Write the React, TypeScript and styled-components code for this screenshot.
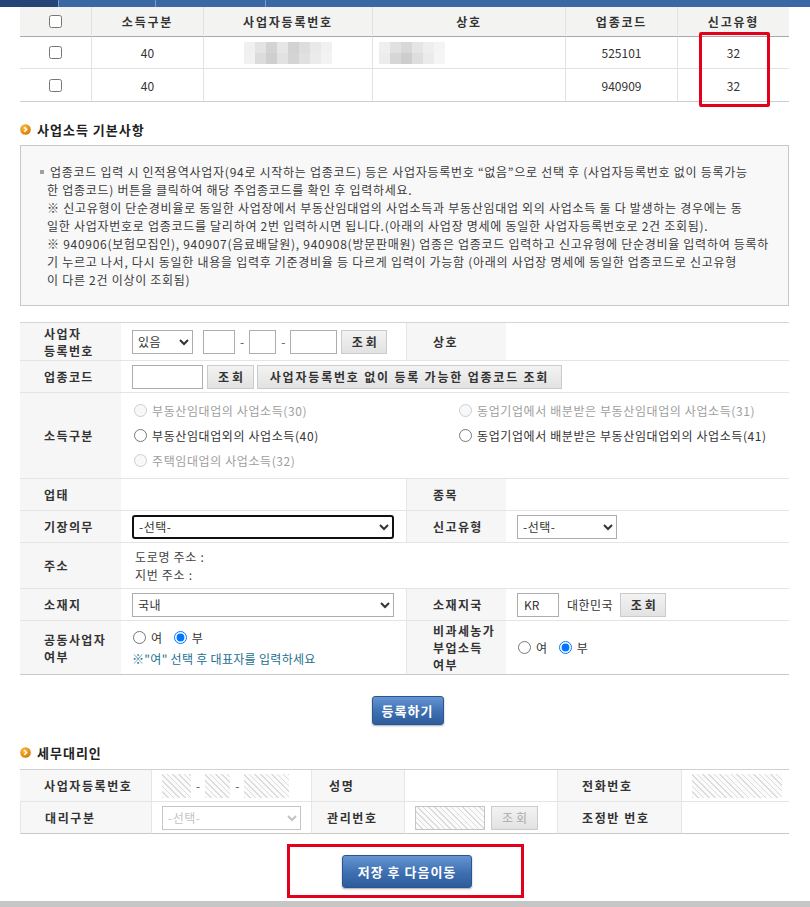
import React from "react";
import styled, { createGlobalStyle } from "styled-components";

const GlobalStyle = createGlobalStyle`
  html, body { margin: 0; padding: 0; background: #fff; }
  body {
    font-family: "Noto Sans CJK KR", "Noto Sans", "Liberation Sans", sans-serif;
    font-size: 12px;
    color: #333;
  }
  * { box-sizing: border-box; }
`;

const Page = styled.div`
  width: 810px;
  height: 907px;
  overflow: hidden;
  display: flex;
  flex-direction: column;
`;

const TopBar = styled.div`
  display: flex;
  height: 7px;
  flex: none;
`;

const BarSeg = styled.div<{ $w?: number; $dark?: boolean; $sep?: boolean }>`
  width: ${(p) => (p.$w ? `${p.$w}px` : "auto")};
  flex: ${(p) => (p.$w ? "none" : 1)};
  background: ${(p) => (p.$dark ? "#254577" : "#3b68a4")};
  border-left: ${(p) => (p.$sep ? "1px solid #7d9ccb" : "none")};
`;

const Content = styled.div`
  width: 769px;
  margin-left: 20px;
  display: flex;
  flex-direction: column;
  flex: none;
`;

/* ---------- top list table ---------- */
const ListTable = styled.div`
  position: relative;
  display: grid;
  grid-template-columns: 71px 112px 169px 193px 112px 112px;
`;

const HeadCell = styled.div<{ $first?: boolean }>`
  height: 30px;
  display: flex;
  align-items: center;
  justify-content: center;
  background: #f3f3f1;
  border-bottom: 1px solid #a9a9a9;
  border-left: ${(p) => (p.$first ? "none" : "1px solid #e2e2e2")};
  font-weight: 700;
  letter-spacing: 1.8px;
  color: #333;
`;

const BodyCell = styled.div<{ $first?: boolean; $h: number; $last?: boolean; $left?: boolean }>`
  height: ${(p) => p.$h}px;
  display: flex;
  align-items: center;
  justify-content: ${(p) => (p.$left ? "flex-start" : "center")};
  padding-left: ${(p) => (p.$left ? "6px" : "0")};
  border-bottom: 1px solid ${(p) => (p.$last ? "#cdcdcd" : "#e2e2e2")};
  border-left: ${(p) => (p.$first ? "none" : "1px solid #e2e2e2")};
  color: #333;
`;

const Check = styled.input`
  width: 13px;
  height: 13px;
  margin: 0;
`;

const Mosaic = styled.div<{ $cols: number }>`
  display: grid;
  grid-template-columns: repeat(${(p) => p.$cols}, 11px);
  grid-auto-rows: 11px;
`;

const Tile = styled.span<{ $c: string }>`
  background: ${(p) => p.$c};
`;

const Annotation = styled.div`
  position: absolute;
  left: 679px;
  top: 25px;
  width: 71px;
  height: 75px;
  border: 3px solid #e2001a;
  border-radius: 2px;
  pointer-events: none;
`;

/* ---------- section titles ---------- */
const SectionTitle = styled.div<{ $mt: number }>`
  margin-top: ${(p) => p.$mt}px;
  height: 18px;
  display: flex;
  align-items: center;
  gap: 6px;
  font-size: 13px;
  font-weight: 700;
  letter-spacing: 1px;
  color: #222;
`;

const BulletIcon = () => (
  <svg width="11" height="11" viewBox="0 0 11 11">
    <defs>
      <radialGradient id="og" cx="40%" cy="35%" r="65%">
        <stop offset="0%" stopColor="#ffc24a" />
        <stop offset="100%" stopColor="#d97a00" />
      </radialGradient>
    </defs>
    <circle cx="5.5" cy="5.5" r="5.3" fill="url(#og)" />
    <path d="M4.3 3.2 L6.6 5.5 L4.3 7.8" fill="none" stroke="#fff" strokeWidth="1.5" />
  </svg>
);

/* ---------- info box ---------- */
const InfoBox = styled.div`
  margin-top: 7px;
  height: 161px;
  border: 1px solid #c8c8c8;
  background: #f8f8f8;
  padding: 17px 8px 0 26px;
  line-height: 18px;
  color: #3a3a3a;
`;

const InfoLine = styled.div`
  white-space: nowrap;
  letter-spacing: 0.72px;
`;

const Square = styled.span`
  display: inline-block;
  width: 4px;
  height: 4px;
  background: #a0a0a0;
  margin-left: -7px;
  margin-right: 6px;
  vertical-align: 3px;
`;

/* ---------- form grid ---------- */
const FormGrid = styled.div`
  margin-top: 16px;
  display: grid;
  grid-template-columns: 101px 285px 100px 283px;
  grid-template-rows: 38px 32px 86px 32px 32px 46px 32px 54px;
  border-top: 1px solid #d5d5d5;
`;

const Label = styled.div<{ $right?: boolean; $last?: boolean }>`
  display: flex;
  align-items: center;
  background: #f6f6f6;
  padding-left: ${(p) => (p.$right ? "26px" : "24px")};
  border-left: ${(p) => (p.$right ? "1px solid #e6e6e6" : "none")};
  border-bottom: 1px solid ${(p) => (p.$last ? "#c8c8c8" : "#e4e4e4")};
  font-weight: 700;
  letter-spacing: 1.4px;
  line-height: 17px;
  color: #333;
`;

const Value = styled.div<{ $span?: boolean; $last?: boolean; $col?: boolean }>`
  grid-column: ${(p) => (p.$span ? "span 3" : "auto")};
  display: flex;
  flex-direction: ${(p) => (p.$col ? "column" : "row")};
  align-items: ${(p) => (p.$col ? "flex-start" : "center")};
  justify-content: ${(p) => (p.$col ? "center" : "flex-start")};
  padding-left: 11px;
  border-bottom: 1px solid ${(p) => (p.$last ? "#c8c8c8" : "#e4e4e4")};
  color: #333;
`;

const TextInput = styled.input<{ $w: number }>`
  width: ${(p) => p.$w}px;
  height: 24px;
  border: 1px solid #adadad;
  background: #fff;
  font: inherit;
  color: #333;
  padding: 0 6px;
  margin: 0;
`;

const Select = styled.select<{ $w: number; $focus?: boolean }>`
  width: ${(p) => p.$w}px;
  height: 24px;
  border: ${(p) => (p.$focus ? "2px solid #111" : "1px solid #adadad")};
  border-radius: ${(p) => (p.$focus ? "3px" : "0")};
  background: #fff;
  font: inherit;
  letter-spacing: 0.5px;
  color: ${(p) => (p.disabled ? "#aaa" : "#333")};
  margin: 0;
  padding: 0 1px;
`;

const GrayButton = styled.button<{ $w: number; $wide?: boolean; $mr?: number }>`
  width: ${(p) => p.$w}px;
  height: 24px;
  margin: 0 ${(p) => p.$mr ?? 0}px 0 0;
  padding: 0 0 0 ${(p) => (p.$wide ? 3 : 0)}px;
  border: 1px solid #cbcbcb;
  background: linear-gradient(#f3f3f3, #e2e2e2);
  font-family: inherit;
  font-size: 12px;
  font-weight: ${(p) => (p.disabled ? 400 : 700)};
  letter-spacing: ${(p) => (p.$wide ? "3px" : "1.8px")};
  color: ${(p) => (p.disabled ? "#aaa" : "#333")};
  white-space: nowrap;
  cursor: pointer;
`;

const Dash = styled.span`
  margin: 0 5px;
  color: #555;
`;

const Gap = styled.span<{ $w: number }>`
  display: inline-block;
  width: ${(p) => p.$w}px;
  flex: none;
`;

const RadioGrid = styled.div`
  display: grid;
  grid-template-columns: 325px 1fr;
  row-gap: 8px;
  padding-left: 1px;
`;

const RadioRow = styled.div`
  display: flex;
  align-items: center;
  gap: 10px;
`;

const RadioLabel = styled.label<{ $disabled?: boolean }>`
  display: inline-flex;
  align-items: center;
  gap: 5px;
  height: 17px;
  white-space: nowrap;
  letter-spacing: 0.6px;
  color: ${(p) => (p.$disabled ? "#9e9e9e" : "#333")};
`;

const Radio = styled.input`
  width: 13px;
  height: 13px;
  margin: 0 0 0 1px;
`;

const AddressLines = styled.div`
  padding-left: 3px;
  line-height: 18px;
  letter-spacing: 0.7px;
  color: #444;
`;

const Note = styled.div`
  margin-top: 4px;
  color: #22708f;
  line-height: 17px;
  letter-spacing: 0.3px;
`;

const PlainText = styled.span`
  margin: 0 7px 0 8px;
  letter-spacing: 0.5px;
  color: #333;
`;

/* ---------- buttons ---------- */
const ButtonRow = styled.div`
  margin-top: 21px;
  display: flex;
  justify-content: center;
  padding-left: 6px;
`;

const BlueButton = styled.button<{ $w: number; $h: number }>`
  width: ${(p) => p.$w}px;
  height: ${(p) => p.$h}px;
  padding: 0;
  border: 1px solid #2a5592;
  border-radius: 3px;
  background: linear-gradient(#6594d2, #3d6fb1 55%, #2d5c9c);
  box-shadow: 0 1px 2px rgba(0, 0, 0, 0.35);
  color: #fff;
  font-family: inherit;
  font-size: 13px;
  font-weight: 700;
  letter-spacing: 1px;
  cursor: pointer;
`;

/* ---------- agent grid ---------- */
const AgentGrid = styled.div`
  margin-top: 8px;
  display: grid;
  grid-template-columns: 131px 160px 93px 153px 124px 108px;
  grid-template-rows: 32px 32px;
  border-top: 1px solid #d0d0d0;
`;

const AgentLabel = styled.div<{ $pad: number; $last?: boolean }>`
  display: flex;
  align-items: center;
  padding-left: ${(p) => p.$pad}px;
  background: #f7f7f7;
  border-left: 1px solid #e6e6e6;
  border-bottom: 1px solid ${(p) => (p.$last ? "#c8c8c8" : "#e4e4e4")};
  font-weight: 700;
  letter-spacing: 1.6px;
  color: #333;
  &:first-child {
    border-left: none;
  }
`;

const AgentValue = styled.div<{ $last?: boolean }>`
  display: flex;
  align-items: center;
  padding-left: 10px;
  border-left: 1px solid #e6e6e6;
  border-bottom: 1px solid ${(p) => (p.$last ? "#c8c8c8" : "#e4e4e4")};
  color: #aaa;
`;

const Hatch = styled.div<{ $w: number; $border?: boolean; $mr?: number }>`
  width: ${(p) => p.$w}px;
  height: 24px;
  margin-right: ${(p) => p.$mr ?? 0}px;
  border: ${(p) => (p.$border ? "1px solid #c4c4c4" : "none")};
  background: repeating-linear-gradient(45deg, #dcdcdc 0 1px, #fbfbfb 1px 4px);
`;

const HighlightBox = styled.div`
  margin-top: 10px;
  margin-left: 267px;
  width: 237px;
  height: 54px;
  border: 3px solid #e2001a;
  display: flex;
  align-items: center;
  justify-content: center;
  padding-left: 3px;
`;

const BottomBar = styled.div`
  margin-top: 3px;
  height: 7px;
  background: #c6c6c6;
  flex: none;
`;

const mosaicA = [
  "#f0f0f0", "#e3e3e3", "#d3d3d3", "#e6e6e6", "#d2d2d2", "#dddddd", "#e9e9e9", "#f1f1f1",
  "#f1f1f1", "#dcdcdc", "#cfcfcf", "#e2e2e2", "#d4d4d4", "#e0e0e0", "#ebebeb", "#f3f3f3",
];
const mosaicB = [
  "#efefef", "#e1e1e1", "#d8d8d8", "#e5e5e5", "#eeeeee", "#f4f4f4",
  "#ececec", "#d6d6d6", "#cdcdcd", "#dedede", "#ebebeb", "#f5f5f5",
];

const rows = [
  { h: 32, kind: "40", code: "525101", type: "32", blur: true },
  { h: 33, kind: "40", code: "940909", type: "32", blur: false },
];

export default function App() {
  return (
    <Page>
      <GlobalStyle />
      <TopBar>
        <BarSeg $w={58} $dark />
        <BarSeg $w={97} $sep />
        <BarSeg $w={110} $sep />
        <BarSeg $sep />
      </TopBar>

      <Content>
        <ListTable>
          <HeadCell $first>
            <Check type="checkbox" />
          </HeadCell>
          <HeadCell>소득구분</HeadCell>
          <HeadCell>사업자등록번호</HeadCell>
          <HeadCell>상호</HeadCell>
          <HeadCell>업종코드</HeadCell>
          <HeadCell>신고유형</HeadCell>
          {rows.map((r, i) => {
            const last = i === rows.length - 1;
            return (
              <React.Fragment key={i}>
                <BodyCell $first $h={r.h} $last={last}>
                  <Check type="checkbox" />
                </BodyCell>
                <BodyCell $h={r.h} $last={last}>{r.kind}</BodyCell>
                <BodyCell $h={r.h} $last={last}>
                  {r.blur && (
                    <Mosaic $cols={8}>
                      {mosaicA.map((c, k) => (
                        <Tile key={k} $c={c} />
                      ))}
                    </Mosaic>
                  )}
                </BodyCell>
                <BodyCell $h={r.h} $last={last} $left>
                  {r.blur && (
                    <Mosaic $cols={6}>
                      {mosaicB.map((c, k) => (
                        <Tile key={k} $c={c} />
                      ))}
                    </Mosaic>
                  )}
                </BodyCell>
                <BodyCell $h={r.h} $last={last}>{r.code}</BodyCell>
                <BodyCell $h={r.h} $last={last}>{r.type}</BodyCell>
              </React.Fragment>
            );
          })}
          <Annotation />
        </ListTable>

        <SectionTitle $mt={18}>
          <BulletIcon />
          사업소득 기본사항
        </SectionTitle>

        <InfoBox>
          <InfoLine>
            <Square />
            업종코드 입력 시 인적용역사업자(94로 시작하는 업종코드) 등은 사업자등록번호 “없음”으로 선택 후 (사업자등록번호 없이 등록가능
          </InfoLine>
          <InfoLine>한 업종코드) 버튼을 클릭하여 해당 주업종코드를 확인 후 입력하세요.</InfoLine>
          <InfoLine>
            ※ 신고유형이 단순경비율로 동일한 사업장에서 부동산임대업의 사업소득과 부동산임대업 외의 사업소득 둘 다 발생하는 경우에는 동
          </InfoLine>
          <InfoLine>
            일한 사업자번호로 업종코드를 달리하여 2번 입력하시면 됩니다.(아래의 사업장 명세에 동일한 사업자등록번호로 2건 조회됨).
          </InfoLine>
          <InfoLine>
            ※ 940906(보험모집인), 940907(음료배달원), 940908(방문판매원) 업종은 업종코드 입력하고 신고유형에 단순경비율 입력하여 등록하
          </InfoLine>
          <InfoLine>
            기 누르고 나서, 다시 동일한 내용을 입력후 기준경비율 등 다르게 입력이 가능함 (아래의 사업장 명세에 동일한 업종코드로 신고유형
          </InfoLine>
          <InfoLine>이 다른 2건 이상이 조회됨)</InfoLine>
        </InfoBox>

        <FormGrid>
          <Label>
            사업자
            <br />
            등록번호
          </Label>
          <Value>
            <Select $w={61} defaultValue="y">
              <option value="y">있음</option>
              <option value="n">없음</option>
            </Select>
            <Gap $w={10} />
            <TextInput $w={32} />
            <Dash>-</Dash>
            <TextInput $w={27} />
            <Dash>-</Dash>
            <TextInput $w={47} />
            <Gap $w={4} />
            <GrayButton $w={46} $wide>
              조회
            </GrayButton>
          </Value>
          <Label $right>상호</Label>
          <Value />

          <Label>업종코드</Label>
          <Value $span>
            <TextInput $w={71} />
            <Gap $w={4} />
            <GrayButton $w={47} $wide $mr={3}>
              조회
            </GrayButton>
            <GrayButton $w={305}>사업자등록번호 없이 등록 가능한 업종코드 조회</GrayButton>
          </Value>

          <Label>소득구분</Label>
          <Value $span>
            <RadioGrid>
              <RadioLabel $disabled>
                <Radio type="radio" name="inc" disabled />
                부동산임대업의 사업소득(30)
              </RadioLabel>
              <RadioLabel $disabled>
                <Radio type="radio" name="inc" disabled />
                동업기업에서 배분받은 부동산임대업의 사업소득(31)
              </RadioLabel>
              <RadioLabel>
                <Radio type="radio" name="inc" />
                부동산임대업외의 사업소득(40)
              </RadioLabel>
              <RadioLabel>
                <Radio type="radio" name="inc" />
                동업기업에서 배분받은 부동산임대업외의 사업소득(41)
              </RadioLabel>
              <RadioLabel $disabled>
                <Radio type="radio" name="inc" disabled />
                주택임대업의 사업소득(32)
              </RadioLabel>
            </RadioGrid>
          </Value>

          <Label>업태</Label>
          <Value />
          <Label $right>종목</Label>
          <Value />

          <Label>기장의무</Label>
          <Value>
            <Select $w={262} $focus defaultValue="">
              <option value="">-선택-</option>
            </Select>
          </Value>
          <Label $right>신고유형</Label>
          <Value>
            <Select $w={100} defaultValue="">
              <option value="">-선택-</option>
            </Select>
          </Value>

          <Label>주소</Label>
          <Value $span>
            <AddressLines>
              도로명 주소 :
              <br />
              지번 주소 :
            </AddressLines>
          </Value>

          <Label>소재지</Label>
          <Value>
            <Select $w={262} defaultValue="kr">
              <option value="kr">국내</option>
            </Select>
          </Value>
          <Label $right>소재지국</Label>
          <Value>
            <TextInput $w={42} defaultValue="KR" />
            <PlainText>대한민국</PlainText>
            <GrayButton $w={46} $wide>
              조회
            </GrayButton>
          </Value>

          <Label $last>
            공동사업자
            <br />
            여부
          </Label>
          <Value $last $col>
            <RadioRow>
              <RadioLabel>
                <Radio type="radio" name="joint" />
                여
              </RadioLabel>
              <RadioLabel>
                <Radio type="radio" name="joint" defaultChecked />
                부
              </RadioLabel>
            </RadioRow>
            <Note>※"여" 선택 후 대표자를 입력하세요</Note>
          </Value>
          <Label $right $last>
            비과세농가
            <br />
            부업소득
            <br />
            여부
          </Label>
          <Value $last>
            <RadioRow>
              <RadioLabel>
                <Radio type="radio" name="farm" />
                여
              </RadioLabel>
              <RadioLabel>
                <Radio type="radio" name="farm" defaultChecked />
                부
              </RadioLabel>
            </RadioRow>
          </Value>
        </FormGrid>

        <ButtonRow>
          <BlueButton $w={72} $h={29}>
            등록하기
          </BlueButton>
        </ButtonRow>

        <SectionTitle $mt={18}>
          <BulletIcon />
          세무대리인
        </SectionTitle>

        <AgentGrid>
          <AgentLabel $pad={24}>사업자등록번호</AgentLabel>
          <AgentValue>
            <Hatch $w={29} />
            <Dash>-</Dash>
            <Hatch $w={25} />
            <Dash>-</Dash>
            <Hatch $w={45} />
          </AgentValue>
          <AgentLabel $pad={17}>성명</AgentLabel>
          <AgentValue />
          <AgentLabel $pad={24}>전화번호</AgentLabel>
          <AgentValue>
            <Hatch $w={90} />
          </AgentValue>

          <AgentLabel $pad={24} $last>
            대리구분
          </AgentLabel>
          <AgentValue $last>
            <Select $w={139} disabled defaultValue="">
              <option value="">-선택-</option>
            </Select>
          </AgentValue>
          <AgentLabel $pad={15} $last>
            관리번호
          </AgentLabel>
          <AgentValue $last>
            <Hatch $w={70} $border $mr={6} />
            <GrayButton $w={47} $wide disabled>
              조회
            </GrayButton>
          </AgentValue>
          <AgentLabel $pad={24} $last>
            조정반 번호
          </AgentLabel>
          <AgentValue $last />
        </AgentGrid>

        <HighlightBox>
          <BlueButton $w={130} $h={33}>
            저장 후 다음이동
          </BlueButton>
        </HighlightBox>
      </Content>
      <BottomBar />
    </Page>
  );
}
